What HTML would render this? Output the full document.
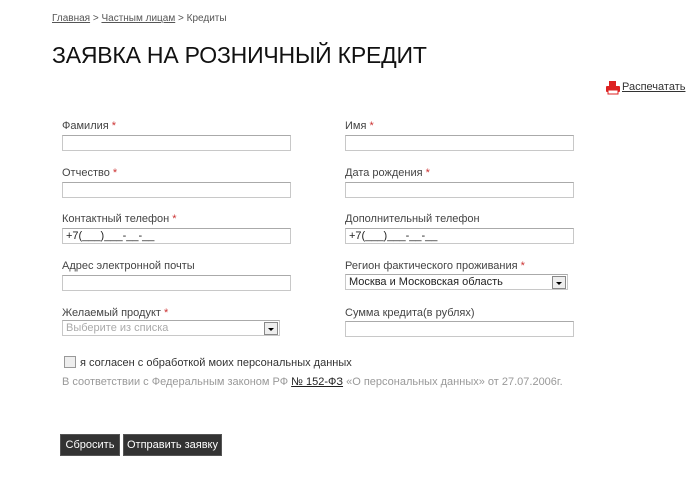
<!DOCTYPE html><html><head><meta charset="utf-8"><style>
body{margin:0;background:#fff;font-family:"Liberation Sans",Arial,sans-serif;width:700px;height:479px;position:relative;overflow:hidden;color:#333}
.a{position:absolute;font-size:11px;white-space:nowrap}
.bc{left:52px;top:13px;font-size:10px;color:#555}
.bc u{color:#555}
h1{position:absolute;left:52px;top:42px;margin:0;font-weight:normal;font-size:23px;color:#111;letter-spacing:-0.2px}
.l{color:#444}
.l i{font-style:normal;color:#c33}
.in{position:absolute;height:14px;border:1px solid #c8c8c8;border-top-color:#aaa;background:#fff;font-size:11px;line-height:14px;padding-left:3px;box-sizing:content-box;color:#222;white-space:nowrap}
.sel .ar{position:absolute;right:1px;top:1px;width:12px;height:11px;border:1px solid #888;background:#eee}
.sel .ar:after{content:"";position:absolute;left:3px;top:5px;border:3px solid transparent;border-top:3px solid #000}
.btn{position:absolute;top:434px;height:22px;background:#333;color:#fff;font-size:11px;line-height:20px;text-align:center;border:1px solid #555;box-sizing:border-box;white-space:nowrap}
</style></head><body>
<div class="a bc"><u>Главная</u> &gt; <u>Частным лицам</u> &gt; Кредиты</div>
<h1>ЗАЯВКА НА РОЗНИЧНЫЙ КРЕДИТ</h1>
<svg style="position:absolute;left:605px;top:80px" width="16" height="15" viewBox="0 0 16 15"><rect x="4" y="1" width="7" height="5" fill="#d22"/><rect x="1" y="6" width="14" height="6" rx="1" fill="#d22"/><rect x="3" y="10" width="10" height="4" fill="#fff" stroke="#d22"/></svg>
<div class="a" style="left:622px;top:81px;color:#333;text-decoration:underline">Распечатать</div>

<div class="a l" style="left:62px;top:120px">Фамилия <i>*</i></div>
<div class="in" style="left:62px;top:135px;width:224px"></div>
<div class="a l" style="left:345px;top:120px">Имя <i>*</i></div>
<div class="in" style="left:345px;top:135px;width:224px"></div>

<div class="a l" style="left:62px;top:167px">Отчество <i>*</i></div>
<div class="in" style="left:62px;top:182px;width:224px"></div>
<div class="a l" style="left:345px;top:167px">Дата рождения <i>*</i></div>
<div class="in" style="left:345px;top:182px;width:224px"></div>

<div class="a l" style="left:62px;top:213px">Контактный телефон <i>*</i></div>
<div class="in" style="left:62px;top:228px;width:224px">+7(___)___-__-__</div>
<div class="a l" style="left:345px;top:213px">Дополнительный телефон</div>
<div class="in" style="left:345px;top:228px;width:224px">+7(___)___-__-__</div>

<div class="a l" style="left:62px;top:260px">Адрес электронной почты</div>
<div class="in" style="left:62px;top:275px;width:224px"></div>
<div class="a l" style="left:345px;top:260px">Регион фактического проживания <i>*</i></div>
<div class="in sel" style="left:345px;top:274px;width:218px">Москва и Московская область<span class="ar"></span></div>

<div class="a l" style="left:62px;top:307px">Желаемый продукт <i>*</i></div>
<div class="in sel" style="left:62px;top:320px;width:213px;color:#aaa">Выберите из списка<span class="ar"></span></div>
<div class="a l" style="left:345px;top:307px">Сумма кредита(в рублях)</div>
<div class="in" style="left:345px;top:321px;width:224px"></div>

<div style="position:absolute;left:64px;top:356px;width:10px;height:10px;border:1px solid #999;background:#eee"></div>
<div class="a" style="left:80px;top:357px;color:#333">я согласен с обработкой моих персональных данных</div>
<div class="a" style="left:62px;top:376px;font-size:11px;color:#999">В соответствии с Федеральным законом РФ <u style="color:#222">№ 152-ФЗ</u> «О персональных данных» от 27.07.2006г.</div>

<div class="btn" style="left:60px;width:60px">Сбросить</div>
<div class="btn" style="left:123px;width:99px">Отправить заявку</div>
</body></html>
